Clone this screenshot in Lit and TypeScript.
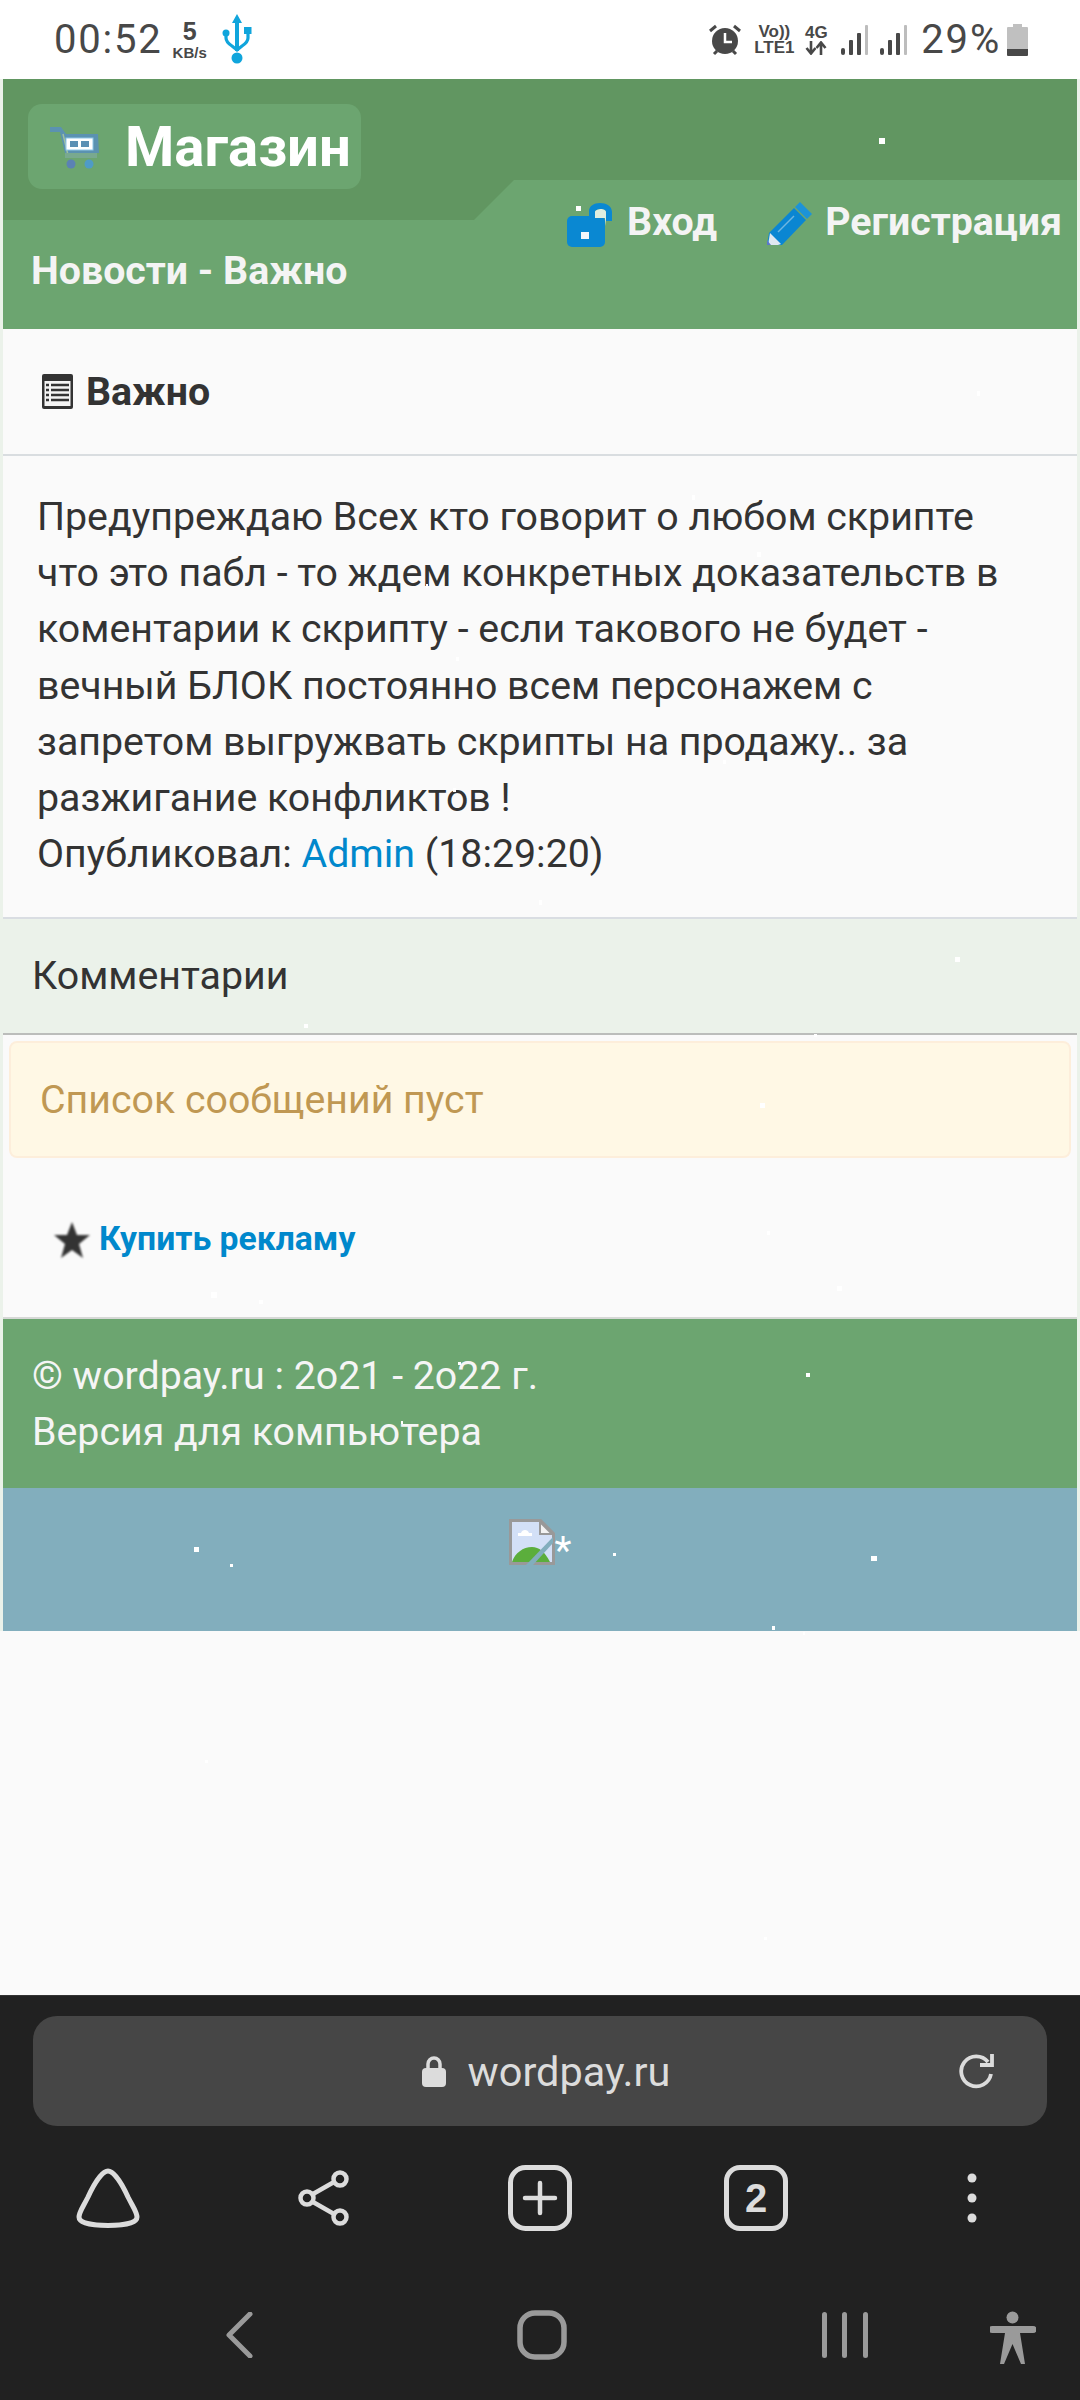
import { LitElement, html, css, svg } from "lit";
import { customElement } from "lit/decorators.js";

const SNOW: [number, number, number, number][] = [
  [879, 138, 6, 6], [576, 206, 5, 5], [311, 271, 3, 3], [983, 221, 3, 3],
  [977, 391, 3, 5], [692, 495, 3, 5], [757, 552, 4, 5], [426, 584, 2, 4],
  [456, 657, 3, 4], [723, 760, 3, 4], [453, 788, 3, 4], [539, 900, 3, 5],
  [955, 957, 5, 5], [304, 1024, 4, 4], [814, 1034, 3, 3], [760, 1103, 5, 5],
  [767, 1231, 3, 4], [837, 1286, 5, 5], [211, 1292, 6, 6], [259, 1300, 4, 4],
  [806, 1373, 4, 4], [458, 1362, 3, 3], [401, 1421, 2, 3], [194, 1547, 5, 5],
  [230, 1564, 3, 3], [613, 1553, 3, 3], [871, 1556, 6, 5], [772, 1626, 3, 4],
  [803, 1632, 2, 3], [205, 1760, 3, 3], [764, 1937, 3, 3],
];

const icon = {
  usb: svg`<svg width="30" height="50" viewBox="0 0 30 50"><path d="M15 0l5 9h-3v28h-4V9h-3z" fill="#10a5dc"/><circle cx="15" cy="44" r="5.500" fill="#10a5dc"/><path d="M4 19v5c0 4 3 6 6 8l5 4 5-4c3-2 6-4 6-8v-4" fill="none" stroke="#10a5dc" stroke-width="3.200"/><circle cx="4" cy="19" r="3.500" fill="#10a5dc"/><rect x="22" y="13" width="7.500" height="7" fill="#10a5dc"/></svg>`,
  alarm: svg`<svg width="34" height="32" viewBox="0 0 34 32"><circle cx="17" cy="17" r="13" fill="#484848"/><path d="M17 9v9h7" fill="none" stroke="#fff" stroke-width="2.500"/><path d="M2 7l6-5M32 7l-6-5M6 30l3-3M28 30l-3-3" stroke="#484848" stroke-width="3"/></svg>`,
  arrows: svg`<svg width="22" height="14" viewBox="0 0 22 14"><path d="M6 0v11M1.500 7L6 12.500 10.500 7M16 14V3M11.500 7L16 1.500 20.500 7" fill="none" stroke="#484848" stroke-width="2.600"/></svg>`,
  signal: svg`<svg width="28" height="30" viewBox="0 0 28 30"><rect x="0" y="23" width="4" height="7" rx="2" fill="#484848"/><rect x="8" y="15" width="4" height="15" rx="1" fill="#484848"/><rect x="16" y="8" width="4" height="22" rx="1" fill="#484848"/><rect x="24" y="0" width="3" height="30" rx="1" fill="#bdbdbd"/></svg>`,
  battery: svg`<svg width="21" height="32" viewBox="0 0 21 32"><path d="M6 0h9v3h5a1 1 0 0 1 1 1v21H0V4a1 1 0 0 1 1-1h5z" fill="#c0c0c0"/><path d="M0 25h21v6a1 1 0 0 1-1 1H1a1 1 0 0 1-1-1z" fill="#484848"/></svg>`,
  cart: svg`<svg width="50" height="42" viewBox="0 0 50 42"><path d="M0 0h11l5 7h32l1 19H15L10 5H0z" fill="#5b90b4" opacity=".95"/><path d="M13 7l5 21h26" fill="none" stroke="#9fc0a0" stroke-width="1.500"/><rect x="16" y="11" width="27" height="12" fill="#fff" stroke="#8fc6e6" stroke-width="1"/><rect x="20" y="14" width="8" height="6" fill="#5b90b4"/><rect x="31" y="14" width="8" height="6" fill="#5b90b4"/><rect x="15" y="26" width="32" height="5" fill="#79a98f"/><circle cx="21" cy="37" r="4.500" fill="#5b82b4"/><circle cx="39" cy="37" r="4.500" fill="#4f9bc6"/></svg>`,
  lock: svg`<svg width="48" height="46" viewBox="0 0 48 46"><rect x="0" y="14" width="38" height="31" rx="5" fill="#0a88d2"/><path d="M22 16V9c0-5 5-8 11-8s12 3 12 9v9h-6V10c0-2-3-3-5-3s-6 1-6 3v6z" fill="#0a88d2"/><path d="M28 16V10c0-2 4-3 6-3s5 1 5 3v7l-1 7V16z" fill="#dfeee0"/><rect x="14" y="30" width="8" height="7" fill="#f3f7fb"/></svg>`,
  pencil: svg`<svg width="46" height="44" viewBox="0 0 46 44"><path d="M33 0l12 12-5 5-12-12z" fill="#1c93d8"/><path d="M27 6l12 12-24 25H0l2-12z" fill="#0a86d2"/><path d="M11 30l16-16" stroke="#6fb5e0" stroke-width="1.500"/><path d="M3 31l11 11-3 1H1z" fill="#dfe8f0"/><path d="M0 38l4 5H0z" fill="#5b78c8"/></svg>`,
  news: svg`<svg width="31" height="35" viewBox="0 0 31 35"><rect width="31" height="35" rx="2" fill="#333"/><rect x="2.500" y="7" width="26" height="25" fill="#f4f4f4"/><path d="M4 11h3M4 16h3M4 21h3M4 26h3M9 11h18M9 16h18M9 21h18M9 26h18" stroke="#333" stroke-width="2.500"/></svg>`,
  star: svg`<svg width="36" height="36" viewBox="0 0 36 36" style="filter:blur(.8px)"><path d="M18 0l5 13h13l-11 9 4 14-11-8-11 8 4-14L0 13h13z" fill="#333"/></svg>`,
  broken: svg`<svg width="46" height="46" viewBox="0 0 46 46"><path d="M1.500 1.500h30l13 13v30h-43z" fill="#d3e0f7" stroke="#999" stroke-width="3"/><path d="M31 3v12h12z" fill="#f3f3f3" stroke="#999" stroke-width="2"/><path d="M12 14c1-4 7-4 8 0h3v3H9v-3z" fill="#fff"/><path d="M3 43c3-9 11-15 20-15 7 0 13 5 18 15z" fill="#5bae3c"/><path d="M44 18v6L24 46h-7z" fill="#82aebd"/></svg>`,
  drop: svg`<svg width="64" height="60" viewBox="0 0 64 60"><path d="M32 3C38 3 46 16 52 29C57 39 61 44 61 49C61 55 48 57.500 32 57.500C16 57.500 3 55 3 49C3 44 7 39 12 29C18 16 26 3 32 3z" fill="none" stroke="#dcdcdc" stroke-width="5" stroke-linejoin="round"/></svg>`,
  share: svg`<svg width="52" height="56" viewBox="0 0 52 56"><g fill="none" stroke="#dcdcdc" stroke-width="4.500"><circle cx="9" cy="28" r="6.500"/><circle cx="42" cy="9" r="6.500"/><circle cx="42" cy="47" r="6.500"/><path d="M15 24l21-12M15 32l21 12"/></g></svg>`,
  plus: svg`<svg width="64" height="66" viewBox="0 0 64 66"><rect x="2.500" y="2.500" width="59" height="61" rx="15" fill="none" stroke="#dcdcdc" stroke-width="5"/><path d="M17 33h30M32 18v30" stroke="#dcdcdc" stroke-width="4.500" stroke-linecap="round"/></svg>`,
  dots: svg`<svg width="10" height="50" viewBox="0 0 10 50"><circle cx="5" cy="5" r="4.500" fill="#dcdcdc"/><circle cx="5" cy="25" r="4.500" fill="#dcdcdc"/><circle cx="5" cy="45" r="4.500" fill="#dcdcdc"/></svg>`,
  lockSmall: svg`<svg width="24" height="31" viewBox="0 0 24 31"><path d="M6 13V8a6 6 0 0 1 12 0v5" fill="none" stroke="#dcdcdc" stroke-width="3.500"/><rect y="12" width="24" height="19" rx="4" fill="#dcdcdc"/></svg>`,
  reload: svg`<svg width="36" height="36" viewBox="0 0 36 36"><path d="M30 9a15 15 0 1 0 3 12" fill="none" stroke="#dcdcdc" stroke-width="3.800"/><path d="M22 12h12V1" fill="none" stroke="#dcdcdc" stroke-width="3.800"/></svg>`,
  back: svg`<svg width="28" height="46" viewBox="0 0 28 46"><path d="M25 2L4 23l21 21" fill="none" stroke="#9a9a9a" stroke-width="5" stroke-linecap="round" stroke-linejoin="round"/></svg>`,
  home: svg`<svg width="50" height="50" viewBox="0 0 50 50"><rect x="3" y="3" width="44" height="44" rx="15" fill="none" stroke="#9a9a9a" stroke-width="5.500"/></svg>`,
  recents: svg`<svg width="46" height="46" viewBox="0 0 46 46"><rect x="0" width="5" height="46" rx="2.500" fill="#9a9a9a"/><rect x="20" width="5" height="46" rx="2.500" fill="#9a9a9a"/><rect x="41" width="5" height="46" rx="2.500" fill="#9a9a9a"/></svg>`,
  person: svg`<svg width="46" height="54" viewBox="0 0 46 54"><circle cx="22.500" cy="6.500" r="6" fill="#9a9a9a"/><path d="M2 15h41a2 2 0 0 1 0 7H30l5 31h-4l-8.500-20L14 53h-4l5-31H2a2 2 0 0 1 0-7z" fill="#9a9a9a"/></svg>`,
};

@customElement("app-root")
export class AppRoot extends LitElement {
  static styles = css`
    :host { display: block; position: relative; width: 1080px; height: 2400px; overflow: hidden; background: #fafafa; font-family: Roboto, "Noto Sans", sans-serif; }
    .screen { display: flex; flex-direction: column; height: 2400px; }
    .status { height: 79px; flex: none; background: #fff; display: flex; align-items: center; justify-content: space-between; padding: 0 52px 0 54px; color: #484848; box-sizing: border-box; }
    .left, .right { display: flex; align-items: center; }
    .time { font-size: 40px; letter-spacing: 1.800px; line-height: 40px; }
    .speed { display: flex; flex-direction: column; align-items: center; margin-left: 10px; margin-top: -2px; font-family: "Liberation Sans", sans-serif; font-weight: 700; }
    .speed b { font-size: 25px; line-height: 28px; }
    .speed span { font-size: 15px; line-height: 16px; }
    .usb { margin-left: 15px; display: flex; margin-top: -1px; }
    .right svg { display: block; }
    .volte { display: flex; flex-direction: column; align-items: center; margin-left: 12px; font-family: "Liberation Sans", sans-serif; font-weight: 700; font-size: 17px; line-height: 16px; width: 40px; }
    .net { display: flex; flex-direction: column; align-items: center; margin-left: 10px; font-family: "Liberation Sans", sans-serif; font-weight: 700; font-size: 17px; line-height: 17px; width: 24px; }
    .sig { margin-left: 13px; }
    .sig2 { margin-left: 11px; }
    .pct { font-size: 40px; margin-left: 13px; letter-spacing: 1.800px; line-height: 40px; }
    .bat { margin-left: 6px; }

    .page { background: #ebf2ea; padding: 0 3px; flex: none; }
    .header { position: relative; height: 250px; box-sizing: border-box; background: #6ca570; display: grid; grid-template-columns: 1fr auto; grid-template-rows: 110px 1fr; color: #f4f4f4; font-weight: 700; }
    .header::before { content: ""; position: absolute; left: 0; top: 0; right: 0; height: 141px; background: #619661; clip-path: polygon(0 0, 100% 0, 100% 101px, 511px 101px, 471px 141px, 0 141px); }
    .brandrow { grid-column: 1 / 3; position: relative; padding: 25px 0 0 25px; }
    .logo { display: inline-flex; width: 333px; height: 85px; box-sizing: border-box; align-items: center; background: #6ca570; border-radius: 14px; padding-left: 22px; color: #fff; font-size: 56.300px; gap: 25px; }
    .logo svg { margin-top: 2px; flex: none; }
    .crumb { position: relative; font-size: 39.300px; padding: 60px 0 0 28px; line-height: 44px; white-space: nowrap; }
    .nav { position: relative; display: flex; align-items: flex-start; padding: 11px 15px 0 0; font-size: 39.300px; line-height: 44px; }
    .nav a { display: flex; align-items: flex-start; }
    .nav a + a { margin-left: 50px; }
    .nav svg { margin-right: 12px; margin-top: 2px; flex: none; }

    .content { background: #fafafa; color: #333; }
    .title { height: 127px; box-sizing: border-box; display: flex; align-items: center; padding: 0 0 0 39px; border-bottom: 2px solid #d9dde0; font-size: 39.300px; font-weight: 700; gap: 13px; }
    .article { padding: 33px 34px 0; height: 463px; box-sizing: border-box; font-size: 39.300px; line-height: 56.200px; border-bottom: 2px solid #d9dde2; }
    .article a { color: #0088cc; }
    .comments { height: 116px; box-sizing: border-box; padding: 0 29px; background: #ebf2ea; display: flex; align-items: center; font-size: 39.300px; border-bottom: 2px solid #bbbdbb; }
    .alert { margin: 6px 6px 0; height: 117px; box-sizing: border-box; border: 2px solid #fdeedb; border-radius: 8px; background: #fff8e5; color: #c09853; display: flex; align-items: center; padding-left: 29px; font-size: 39.300px; }
    .ad { height: 161px; box-sizing: border-box; display: flex; align-items: flex-start; padding: 61px 0 0 51px; font-size: 33.700px; font-weight: 700; color: #0088cc; line-height: 40px; gap: 9px; border-bottom: 2px solid #d6d8d6; }
    .ad svg { margin-top: 3px; flex: none; }
    .footer { background: #6ca570; height: 169px; box-sizing: border-box; padding: 29px 0 0 29px; color: #f5f5f5; font-size: 39.300px; line-height: 56.200px; }
    .banner { background: #82aebd; height: 143px; box-sizing: border-box; display: flex; justify-content: center; align-items: flex-start; padding-top: 31px; color: #fff; font-size: 39.300px; line-height: 40px; }
    .banner span { margin-top: 12px; }
    .fill { flex: 1; }

    .browser { height: 405px; flex: none; box-sizing: border-box; background: #212121; padding-top: 20px; border-top: 1px solid #333; }
    .url { margin: 0 33px; height: 110px; box-sizing: border-box; background: #464646; border-radius: 24px; position: relative; display: flex; align-items: center; justify-content: center; color: #dcdcdc; font-size: 41.500px; gap: 22px; padding-left: 12px; }
    .url .reload { position: absolute; right: 53px; top: 37px; display: flex; }
    .tools { display: grid; grid-template-columns: repeat(5, 216px); height: 66px; margin-top: 39px; align-items: center; justify-items: center; }
    .tab { width: 64px; height: 66px; box-sizing: border-box; border: 5px solid #dcdcdc; border-radius: 16px; display: flex; align-items: center; justify-content: center; color: #dcdcdc; font-weight: 700; font-size: 40px; font-family: "Liberation Sans", sans-serif; }
    .sys { display: grid; grid-template-columns: 303px 303px 303px 84px; padding-left: 87px; margin-top: 74px; align-items: center; justify-items: center; }
    .sys .person { justify-self: start; margin-left: -6px; margin-top: 6px; display: flex; }
    .sys svg { display: block; }

    .snow { position: absolute; background: #fff; }
  `;

  render() {
    return html`
      <div class="screen">
        <div class="status">
          <div class="left">
            <span class="time">00:52</span>
            <div class="speed"><b>5</b><span>KB/s</span></div>
            <div class="usb">${icon.usb}</div>
          </div>
          <div class="right">
            ${icon.alarm}
            <div class="volte"><span>Vo))</span><span>LTE1</span></div>
            <div class="net"><span>4G</span>${icon.arrows}</div>
            <div class="sig">${icon.signal}</div>
            <div class="sig2">${icon.signal}</div>
            <span class="pct">29%</span>
            <div class="bat">${icon.battery}</div>
          </div>
        </div>
        <div class="page">
          <div class="header">
            <div class="brandrow"><div class="logo">${icon.cart}<span>Магазин</span></div></div>
            <div class="crumb">Новости - Важно</div>
            <div class="nav">
              <a>${icon.lock}<span>Вход</span></a>
              <a>${icon.pencil}<span>Регистрация</span></a>
            </div>
          </div>
          <div class="content">
            <div class="title">${icon.news}<span>Важно</span></div>
            <div class="article">
              Предупреждаю Всех кто говорит о любом скрипте<br />
              что это пабл - то ждем конкретных доказательств в<br />
              коментарии к скрипту - если такового не будет -<br />
              вечный БЛОК постоянно всем персонажем с<br />
              запретом выгружвать скрипты на продажу.. за<br />
              разжигание конфликтов !<br />
              Опубликовал: <a>Admin</a> (18:29:20)
            </div>
            <div class="comments">Комментарии</div>
            <div class="alert">Список сообщений пуст</div>
            <div class="ad">${icon.star}<span>Купить рекламу</span></div>
          </div>
          <div class="footer">© wordpay.ru : 2о21 - 2о22 г.<br />Версия для компьютера</div>
          <div class="banner">${icon.broken}<span>*</span></div>
        </div>
        <div class="fill"></div>
        <div class="browser">
          <div class="url">
            ${icon.lockSmall}<span>wordpay.ru</span>
            <div class="reload">${icon.reload}</div>
          </div>
          <div class="tools">
            ${icon.drop}${icon.share}${icon.plus}
            <div class="tab">2</div>
            ${icon.dots}
          </div>
          <div class="sys">
            ${icon.back}${icon.home}${icon.recents}
            <div class="person">${icon.person}</div>
          </div>
        </div>
      </div>
      ${SNOW.map(([x, y, w, h]) => html`<i class="snow" style="left:${x}px;top:${y}px;width:${w}px;height:${h}px"></i>`)}
    `;
  }
}
